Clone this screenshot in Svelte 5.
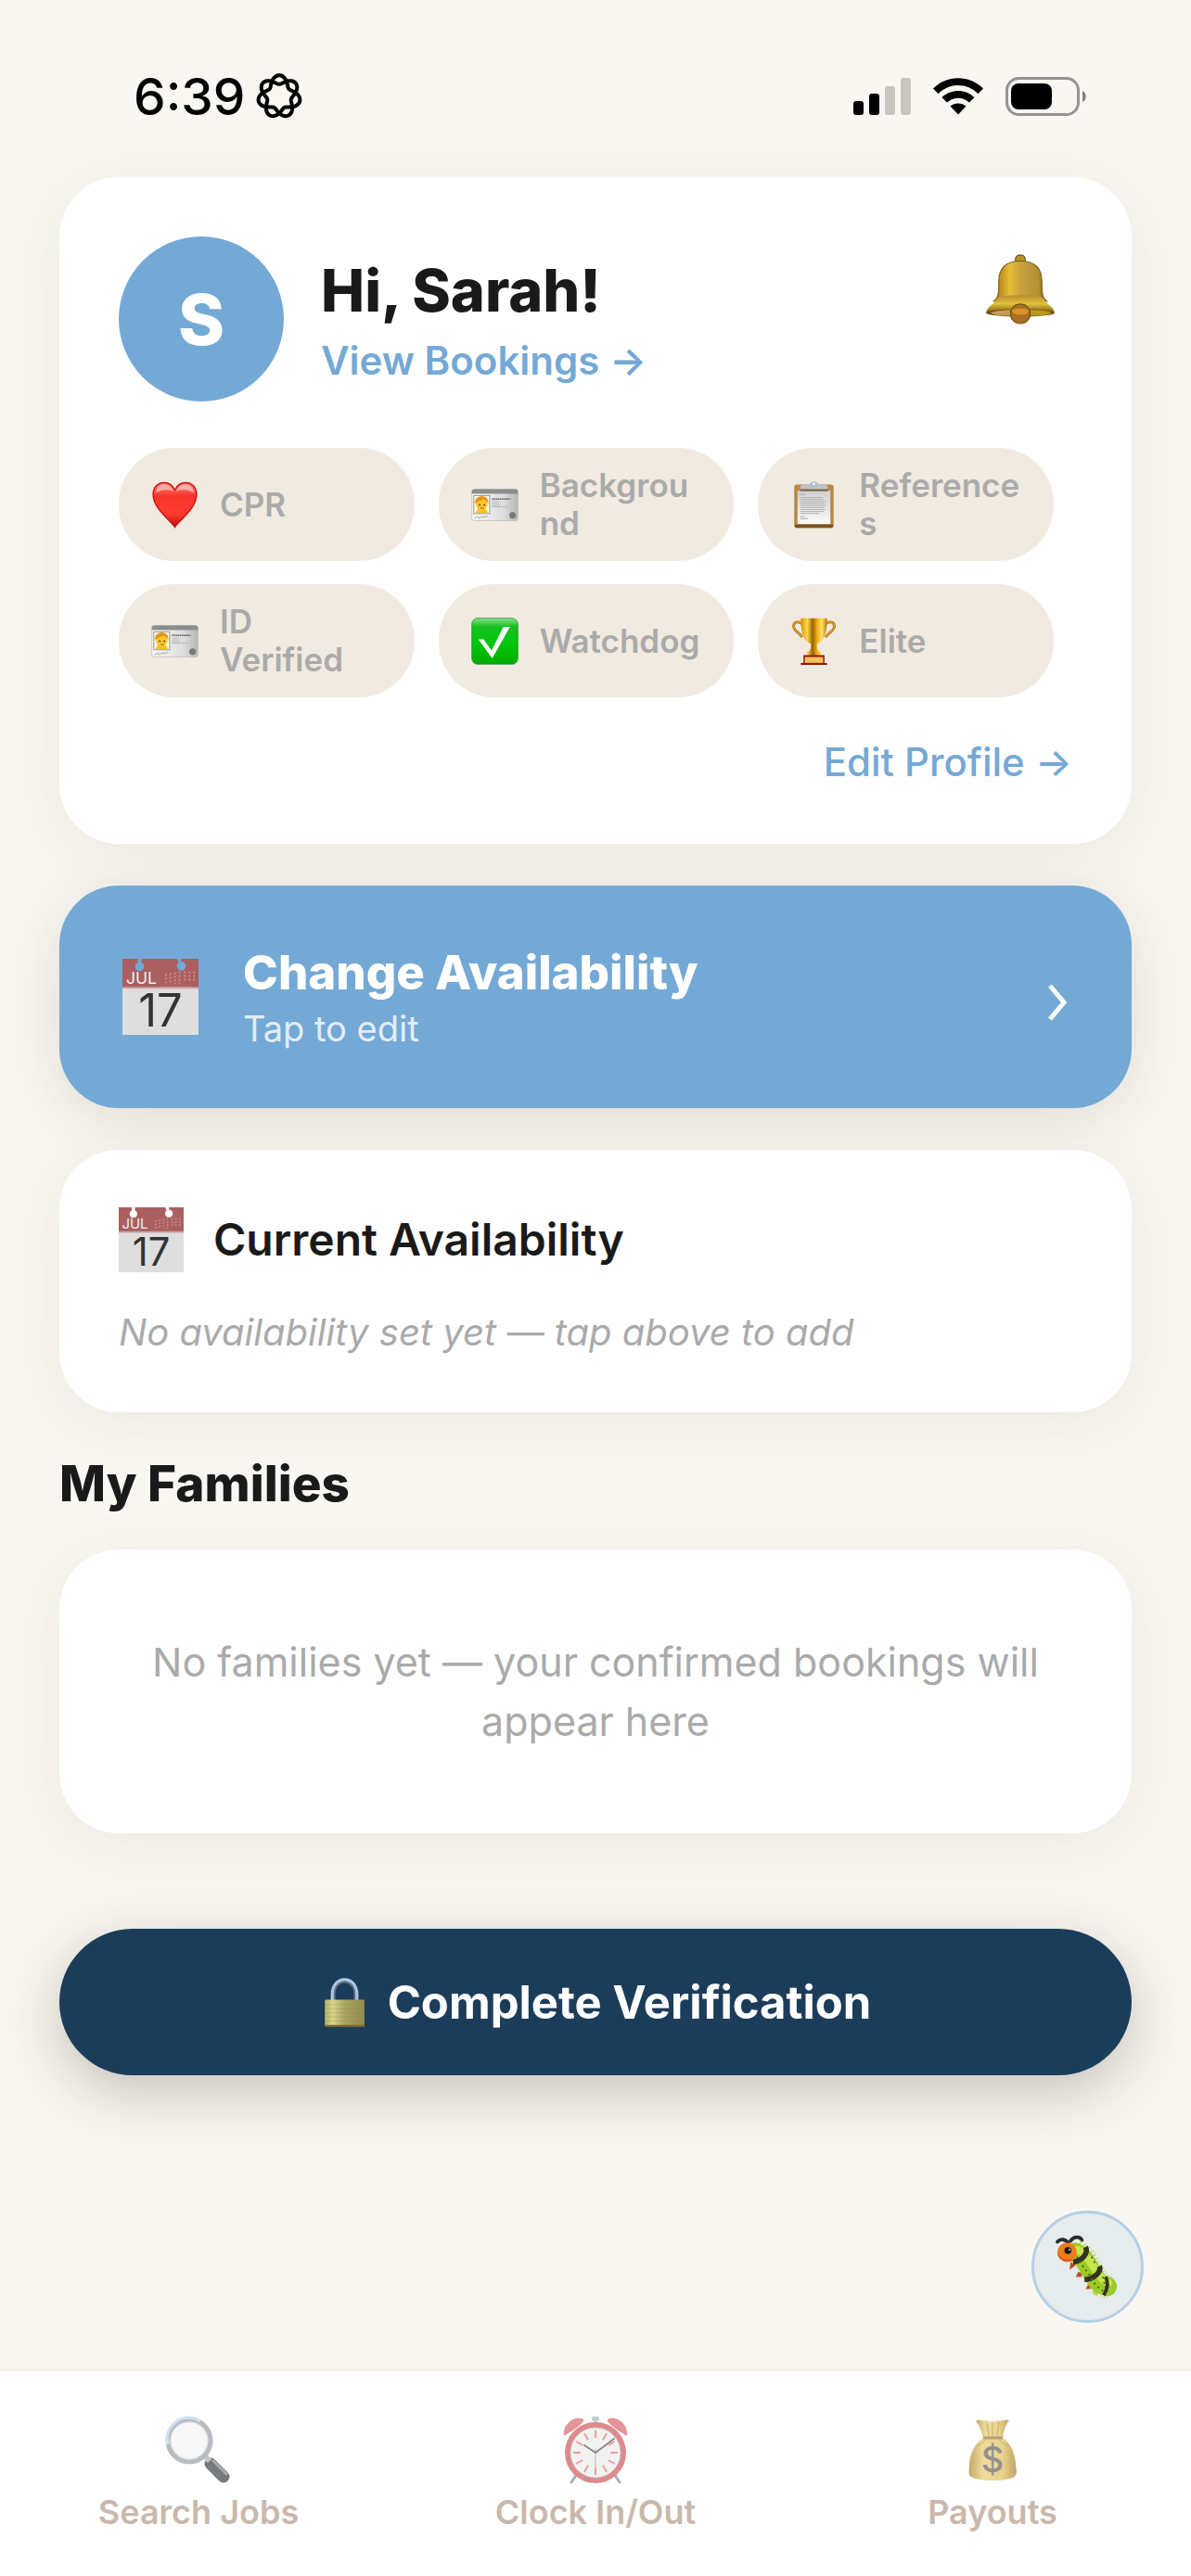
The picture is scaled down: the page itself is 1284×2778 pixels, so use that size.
<script lang="ts">
  const user = { name: 'Sarah', initial: 'S' };

  const badges = [
    { icon: 'heart', label: 'CPR' },
    { icon: 'idCard', label: 'Background' },
    { icon: 'clipboard', label: 'References' },
    { icon: 'idCard', label: 'ID Verified' },
    { icon: 'check', label: 'Watchdog' },
    { icon: 'trophy', label: 'Elite' }
  ];

  const tabs = [
    { icon: 'search', label: 'Search Jobs' },
    { icon: 'clock', label: 'Clock In/Out' },
    { icon: 'money', label: 'Payouts' }
  ];

  const ticks = Array.from({ length: 12 }, (_, i) => i * 30);

  // closed curve with seven interlaced lobes, two turns round the centre
  function knot(radius: number, amp: number) {
    const steps = 280;
    let d = '';
    for (let i = 0; i < steps; i++) {
      const t = (i / steps) * Math.PI * 4;
      const r = radius + amp * Math.cos(3.5 * t);
      const x = 25 + r * Math.sin(t);
      const y = 25 - r * Math.cos(t);
      d += `${i ? 'L' : 'M'}${x.toFixed(2)} ${y.toFixed(2)}`;
    }
    return d + 'Z';
  }
</script>

{#snippet calendar()}
  <svg class="calendar" viewBox="0 0 84 84" aria-hidden="true">
    <path fill="#dedede" d="M0 32h84v52H0z" />
    <path fill="#ab5f60" fill-rule="evenodd" d="M0 0h17v4a5 5 0 1 0 4 0V0h39l2 4a5 5 0 1 0 3-1V0h19v32H0z" />
    <path fill="#c9a5a5" d="M0 31h84v2H0z" />
    <g stroke="#c98f90" stroke-width="2" stroke-dasharray="2 2">
      <path d="M48 17v11M53 16v12M58 15v13M63 14v14M69 14v12M74 14v12M79 14v12" />
    </g>
    <text class="month" x="21" y="28">JUL</text>
    <text class="day" x="42" y="75">17</text>
  </svg>
{/snippet}

{#snippet emoji(name: string)}
  <svg viewBox="0 0 72 72" aria-hidden="true">
    {#if name === 'heart'}
      <defs>
        <linearGradient id="heart" x2="0" y2="1">
          <stop offset="0" stop-color="#ff8a80" />
          <stop offset=".3" stop-color="#f5352c" />
          <stop offset=".7" stop-color="#ff3b30" />
          <stop offset="1" stop-color="#b80d08" />
        </linearGradient>
      </defs>
      <path fill="url(#heart)" stroke="#d30f0c" stroke-width="2" d="M36 70C30 60 3 42 3 20C3 8 11 2 20 2c8 0 13 5 16 11C39 7 44 2 52 2c9 0 17 6 17 18c0 22-27 40-33 50z" />
      <path fill="#fff" opacity=".45" d="M7 18C8 9 13 5 20 5c7 0 11 4 14 10c-9-3-18-3-27 3zM38 15c3-6 7-10 14-10c7 0 12 4 13 13c-9-6-18-6-27-3z" />
    {:else if name === 'idCard'}
      <defs>
        <linearGradient id="plastic">
          <stop offset="0" stop-color="#f6f6f6" />
          <stop offset=".7" stop-color="#dcdcdc" />
          <stop offset="1" stop-color="#b4b4b4" />
        </linearGradient>
      </defs>
      <rect x="1" y="12" width="70" height="48" rx="4" fill="url(#plastic)" stroke="#b9b9b9" />
      <path fill="#8d8d8d" d="M1 19v-3a4 4 0 0 1 4-4h62a4 4 0 0 1 4 4v3z" />
      <path fill="#fff" stroke="#a09a86" stroke-width="1.5" d="M4 22h24v27H4z" />
      <path fill="#ffc21f" d="M7 48c0-5 4-7 9-7s9 2 9 7z" />
      <circle cx="16" cy="35" r="9" fill="#ffc62b" />
      <path fill="#e89412" d="M6 35c-1-9 4-12 10-12s11 3 10 12c-2-4-3-6-7-7c-4 1-10 2-13 7z" />
      <circle cx="13" cy="36" r="1.3" fill="#5b3508" />
      <circle cx="20" cy="36" r="1.3" fill="#5b3508" />
      <path stroke="#5b3508" d="M14 41h5" />
      <path stroke="#333" stroke-width="2" stroke-dasharray="2 1" d="M32 27h28" />
      <path stroke="#999" stroke-dasharray="3 1" d="M32 31h12M32 34h10M32 37h11M32 39h24" />
      <path fill="none" stroke="#888" d="M5 57c5-5 6-3 6-1s4-2 6-2s4 1 8-1" />
      <circle cx="63" cy="52" r="5" fill="#777" />
    {:else if name === 'clipboard'}
      <defs>
        <linearGradient id="paper" x2="0" y2="1">
          <stop offset="0" stop-color="#cfcfcf" />
          <stop offset="1" stop-color="#fafafa" />
        </linearGradient>
      </defs>
      <rect x="6" y="5" width="60" height="66" rx="4" fill="#b88746" />
      <path fill="#7b5122" d="M7 66h58v2a3 3 0 0 1-3 3H10a3 3 0 0 1-3-3z" />
      <path fill="url(#paper)" d="M11 14h50v51H11z" />
      <path stroke="#8f8f8f" d="M15 20h8" />
      <g stroke="#b0b0b0" stroke-width="1.4">
        <path d="M15 25h34M15 28h36M15 31h39M15 34h38M15 37h39M15 40h37M15 43h38M15 46h36M15 49h29M15 54h7M15 57h12" />
      </g>
      <path fill="#775c38" d="M15 12h42v3H15z" />
      <path fill="#b9c4cd" d="M15 12V9c0-3 3-4 9-4h3c2 0 3-4 9-4s7 4 9 4h3c6 0 9 1 9 4v3z" />
      <circle cx="36" cy="4" r="3" fill="#f4f8fb" stroke="#7f9fbd" />
    {:else if name === 'check'}
      <defs>
        <linearGradient id="green" x2="0" y2="1">
          <stop offset="0" stop-color="#8be28d" />
          <stop offset=".18" stop-color="#19bf23" />
          <stop offset=".5" stop-color="#00c90b" />
          <stop offset="1" stop-color="#00ac00" />
        </linearGradient>
      </defs>
      <rect x="1" y="1" width="70" height="70" rx="9" fill="url(#green)" stroke="#12872a" />
      <path fill="#fff" d="M11 33h8l12 17L49 14h10L32 62z" />
    {:else if name === 'trophy'}
      <defs>
        <linearGradient id="gold">
          <stop offset="0" stop-color="#d98f04" />
          <stop offset=".25" stop-color="#ffd84a" />
          <stop offset=".45" stop-color="#9a6204" />
          <stop offset=".6" stop-color="#e8a80f" />
          <stop offset=".8" stop-color="#ffe368" />
          <stop offset="1" stop-color="#b87504" />
        </linearGradient>
      </defs>
      <path fill="none" stroke="#a06a12" stroke-width="4" d="M20 12C15 4 5 6 5 13c0 8 9 9 13 17M52 12c5-8 15-6 15 1c0 8-9 9-13 17" />
      <path fill="none" stroke="#e3a526" stroke-width="2" d="M20 12C15 4 5 6 5 13c0 8 9 9 13 17M52 12c5-8 15-6 15 1c0 8-9 9-13 17" />
      <path fill="url(#gold)" d="M16 1h40c0 20-3 34-15 39c-1 5 0 9 3 12h3v6H25v-6h3c3-3 4-7 3-12C19 35 16 21 16 1z" />
      <path fill="#8e1a0a" d="M20 57h32v12h4v3H16v-3h4z" />
      <path fill="#f5c355" d="M22 60h28v9H22z" />
    {:else if name === 'bell'}
      <defs>
        <linearGradient id="brass">
          <stop offset="0" stop-color="#7d5a0c" />
          <stop offset=".1" stop-color="#b98a1c" />
          <stop offset=".3" stop-color="#e6bd36" />
          <stop offset=".5" stop-color="#c8a240" />
          <stop offset=".85" stop-color="#b29130" />
          <stop offset="1" stop-color="#5f5008" />
        </linearGradient>
        <linearGradient id="rim" x2="0" y2="1">
          <stop offset="0" stop-color="#b58a2c" />
          <stop offset=".5" stop-color="#e2c23c" />
          <stop offset="1" stop-color="#7a5a0c" />
        </linearGradient>
      </defs>
      <rect x="31" y="2" width="10" height="9" rx="4" fill="#b8932a" stroke="#6c530f" />
      <path fill="url(#brass)" stroke="#7a5c12" d="M36 8c15 0 22 8 22 21c0 10 0 17 5 20H9c5-3 5-10 5-20C14 16 21 8 36 8z" />
      <path fill="url(#rim)" d="M13 45c15-3 31-3 46 0c3 7 11 9 12 16c-18-5-52-5-70 0c1-7 9-9 12-16z" />
      <ellipse cx="36" cy="61" rx="35" ry="4" fill="#6d4d10" />
      <path fill="#b89a19" d="M46 58c11 0 19 1 22 3c-4 2-12 3-22 3z" />
      <path fill="#c99a5a" d="M5 61c5-2 13-3 21-3v6c-9 0-17-1-21-3z" />
      <circle cx="36" cy="62" r="10" fill="#a87020" stroke="#70500f" />
      <path fill="#e0902a" d="M27 58c5-2 13-2 18 0c-1 5-5 5-9 5s-8-1-9-5z" />
    {:else if name === 'lock'}
      <defs>
        <linearGradient id="body">
          <stop offset="0" stop-color="#b5b264" />
          <stop offset=".2" stop-color="#d9d38b" />
          <stop offset=".5" stop-color="#aaa562" />
          <stop offset="1" stop-color="#918d4e" />
        </linearGradient>
      </defs>
      <path fill="none" stroke="#6c7378" stroke-width="7" d="M19 36V24c0-27 34-27 34 0v12" />
      <path fill="none" stroke="#a9c8ee" stroke-width="4" d="M18 36V24c0-29 36-29 36 0v12" />
      <rect x="7" y="32" width="58" height="40" rx="2" fill="url(#body)" />
      <path fill="#7b6231" d="M7 69h58v3H7z" />
      <path stroke="#8f8b4b" opacity=".4" d="M7 39h58M7 45h58M7 51h58M7 57h58M7 63h58" />
    {:else if name === 'bug'}
      <path fill="none" stroke="#2d2b2d" stroke-width="4" stroke-linecap="round" d="M1 7c4-4 9-3 12 1M16 6c4-6 11-5 13-1" />
      <path fill="#c8452d" d="M16 30l6 4l-7 5zM25 41l6 3l-3 3h-6zM37 55l6 2l-4 4h-6z" />
      <path fill="none" stroke="#b7d64b" stroke-width="27" stroke-dasharray="1 3" d="M22 18c16 7 18 26 29 38l11 4" />
      <path fill="none" stroke="#9ccb25" stroke-width="22" stroke-linecap="round" d="M21 19c15 6 18 27 29 36l8 3" />
      <path fill="none" stroke="#c6e64c" stroke-width="9" stroke-linecap="round" d="M24 16c15 8 19 25 30 35l5 3" />
      <path fill="none" stroke="#343323" stroke-width="6" d="M33 13c4 7-4 16-14 17M49 35c3 6-7 15-17 15" />
      <path fill="none" stroke="#343323" stroke-width="4" d="M56 47c4 7 2 14-2 21" />
      <path fill="none" stroke="#44631a" stroke-width="2" stroke-dasharray="2 4" d="M23 24l8 12l6 8l8 13l8 6M40 24l4 8M53 47l2 9" />
      <circle cx="12" cy="19" r="11" fill="#ee7a18" />
      <path fill="#d63e18" opacity=".6" d="M1 19a11 11 0 0 0 18 8C9 28 4 25 1 19z" />
      <circle cx="13" cy="17" r="4" fill="#1c1c20" />
      <circle cx="15" cy="16" r="1" fill="#fff" />
    {:else if name === 'search'}
      <path stroke="#777a7c" stroke-width="13" stroke-linecap="round" d="M49 51l14 14" />
      <path stroke="#a8abad" stroke-width="3" stroke-linecap="round" d="M52 48l14 14" />
      <path stroke="#c4c8ca" stroke-width="6" d="M42 42l6 6" />
      <circle cx="26" cy="26" r="23" fill="#f8f8f8" stroke="#b8bcc0" stroke-width="5" />
      <path fill="none" stroke="#cfe2f4" stroke-width="3" d="M3 30A23 23 0 0 1 38 5" />
      <circle cx="26" cy="26" r="20" fill="none" stroke="#d8dadb" />
    {:else if name === 'clock'}
      <path stroke="#a9b0b5" stroke-width="3" stroke-linecap="round" d="M16 62l-6 9M56 62l6 9" />
      <path stroke="#b5bcc2" stroke-width="2" d="M36 3v8M15 14l4 5M57 14l-4 5" />
      <path fill="#e5949a" d="M2 21C0 9 13-2 23 3c2 4-13 13-21 18zM70 21C72 9 59-2 49 3c-2 4 13 13 21 18z" />
      <rect x="32" y="0" width="8" height="5" rx="2" fill="#c2ccd5" />
      <circle cx="36" cy="39" r="30" fill="#f2f2f2" stroke="#dd8a8e" stroke-width="6" />
      <circle cx="36" cy="39" r="27" fill="none" stroke="#c9c9c9" />
      {#each ticks as angle}
        <path stroke="#eea09c" stroke-width="2" d="M36 15v8" transform="rotate({angle} 36 39)" />
      {/each}
      <path stroke="#c9b290" d="M36 35v26" />
      <path fill="none" stroke="#8c8c8c" stroke-width="2" stroke-linecap="round" d="M24 31l12 8l20-15" />
    {:else if name === 'money'}
      <defs>
        <linearGradient id="sack">
          <stop offset="0" stop-color="#c6a96b" />
          <stop offset=".3" stop-color="#efdc9c" />
          <stop offset=".7" stop-color="#e9d38c" />
          <stop offset="1" stop-color="#c2a468" />
        </linearGradient>
      </defs>
      <path fill="url(#sack)" d="M18 5c5-3 8 1 11-1c5 2 8 2 13 0c4 2 7-2 12 0c-5 7-6 13-7 19H26c-2-8-4-13-8-18z" />
      <path fill="url(#sack)" d="M26 23h21c9 6 13 16 14 28c0 4 2 9 0 12c-3 8-46 8-50 0c-1-3 0-8 0-12c1-12 6-22 15-28z" />
      <path fill="none" stroke="#b99d79" stroke-width="3" d="M26 23h21" />
      <path stroke="#c5aa70" d="M30 7l2 14M36 6v15M43 6l-2 15" />
      <path fill="none" stroke="#c5aa70" d="M20 32c5-3 8-6 9-8M52 32c-5-3-8-6-9-8" />
      <text class="dollar" x="36" y="60">$</text>
    {/if}
  </svg>
{/snippet}

<div class="screen">
  <div class="status">
    <div class="status-left">
      <time>6:39</time>
      <svg class="knot" viewBox="0 0 50 50" aria-hidden="true">
        <path d={knot(18, 4.8)} />
      </svg>
    </div>
    <div class="status-right">
      <svg class="signal" viewBox="0 0 62 40" aria-hidden="true">
        <rect y="25" width="11" height="15" rx="3" />
        <rect x="17" y="17" width="11" height="23" rx="3" />
        <rect class="off" x="34" y="9" width="11" height="31" rx="3" />
        <rect class="off" x="51" width="11" height="40" rx="3" />
      </svg>
      <svg class="wifi" viewBox="0 0 54 40" aria-hidden="true">
        <path d="M0 11.500C15-3.500 39-3.500 54 11.500L48.500 17C36 5 18 5 5.500 17Z" />
        <path d="M9.500 21C19 11.500 35 11.500 44.500 21L39 26.500C32 20 22 20 15 26.500Z" />
        <path d="M18.500 30.500C23 26.500 31 26.500 35.500 30.500L27 39.500Z" />
      </svg>
      <svg class="battery" viewBox="0 0 88 42" aria-hidden="true">
        <rect x="1.500" y="1.500" width="77" height="39" rx="13" fill="none" stroke="#969491" stroke-width="3" />
        <rect x="6" y="7" width="44" height="28" rx="8" />
        <path fill="#858381" d="M83 15c5 2 5 10 0 12z" />
      </svg>
    </div>
  </div>

  <main>
    <section class="card profile">
      <header>
        <div class="avatar">{user.initial}</div>
        <div class="greeting">
          <h1>Hi, {user.name}!</h1>
          <a href="#bookings">View Bookings →</a>
        </div>
        <button class="bell" type="button" aria-label="Notifications">{@render emoji('bell')}</button>
      </header>
      <ul class="badges">
        {#each badges as badge}
          <li>
            {@render emoji(badge.icon)}
            <span>{badge.label}</span>
          </li>
        {/each}
      </ul>
      <a class="edit" href="#profile">Edit Profile →</a>
    </section>

    <button class="card change" type="button">
      <span class="icon-large">{@render calendar()}</span>
      <span class="change-text">
        <strong>Change Availability</strong>
        <small>Tap to edit</small>
      </span>
      <svg class="chevron" viewBox="0 0 24 48" aria-hidden="true"><path d="M4 12l15 18L4 48" /></svg>
    </button>

    <section class="card current">
      <h2>{@render calendar()} Current Availability</h2>
      <p>No availability set yet — tap above to add</p>
    </section>

    <section class="families">
      <h2>My Families</h2>
      <div class="card empty">No families yet — your confirmed bookings will appear here</div>
    </section>

    <button class="verify" type="button">
      {@render emoji('lock')}
      <span>Complete Verification</span>
    </button>
  </main>

  <button class="report" type="button" aria-label="Report a bug">{@render emoji('bug')}</button>

  <nav>
    {#each tabs as tab}
      <a href="#{tab.icon}">
        {@render emoji(tab.icon)}
        <span>{tab.label}</span>
      </a>
    {/each}
  </nav>
</div>

<style>
  :global(body) {
    margin: 0;
    background: #faf7f2;
  }

  .screen {
    --blue: #74a9d6;
    --ink: #1a1a1a;
    --muted: #aaaaaa;
    position: relative;
    display: flex;
    flex-direction: column;
    min-height: 100vh;
    background: #faf7f2;
    color: var(--ink);
    font-family: Inter, "Liberation Sans", sans-serif;
  }

  h1, h2, p, ul {
    margin: 0;
    padding: 0;
  }
  a {
    color: var(--blue);
    text-decoration: none;
  }
  button {
    border: none;
    padding: 0;
    font-family: inherit;
    cursor: pointer;
  }
  svg {
    display: block;
    flex: none;
    overflow: visible;
  }

  .status {
    display: flex;
    align-items: center;
    justify-content: space-between;
    padding: 72px 112px 55px 144px;
  }
  .status-left, .status-right {
    display: flex;
    align-items: center;
  }
  .status-left {
    gap: 12px;
  }
  .status-right {
    gap: 24px;
  }
  time {
    color: #000;
    font-size: 55px;
    font-weight: 500;
    line-height: 64px;
  }
  .knot {
    width: 50px;
  }
  .knot path {
    fill: none;
    stroke: #000;
    stroke-width: 4;
  }
  .signal {
    width: 62px;
  }
  .signal .off {
    fill: #c8c5c1;
  }
  .wifi {
    width: 54px;
  }
  .battery {
    width: 88px;
  }

  main {
    display: flex;
    flex: 1;
    flex-direction: column;
    gap: 45px;
    padding: 0 64px 64px;
  }
  .card {
    border-radius: 64px;
    background: #fff;
    box-shadow: 0 12px 64px rgba(60, 50, 30, .08);
  }

  .profile {
    display: flex;
    flex-direction: column;
    padding: 64px;
  }
  header {
    display: flex;
    align-items: center;
    gap: 40px;
  }
  .avatar {
    display: flex;
    align-items: center;
    justify-content: center;
    width: 178px;
    height: 178px;
    border-radius: 50%;
    background: var(--blue);
    color: #fff;
    font-size: 76px;
    font-weight: 800;
  }
  .greeting {
    display: flex;
    flex: 1;
    flex-direction: column;
    gap: 14px;
  }
  h1 {
    font-size: 63px;
    font-weight: 800;
    line-height: 76px;
  }
  .greeting a {
    font-size: 42px;
    font-weight: 600;
    line-height: 48px;
  }
  .bell {
    align-self: flex-start;
    padding: 18px;
    background: none;
  }
  .bell svg {
    width: 76px;
  }

  .badges {
    display: flex;
    flex-wrap: wrap;
    gap: 25px 26px;
    margin-top: 50px;
    list-style: none;
  }
  .badges li {
    display: flex;
    align-items: center;
    gap: 23px;
    box-sizing: border-box;
    width: 31%;
    min-height: 122px;
    padding: 16px 35px;
    border-radius: 60px;
    background: #f1eae0;
    color: var(--muted);
    font-size: 35px;
    font-weight: 600;
    line-height: 41px;
  }
  .badges svg {
    width: 51px;
  }
  .badges span {
    min-width: 0;
    overflow-wrap: anywhere;
  }
  .edit {
    align-self: flex-end;
    margin-top: 46px;
    font-size: 42px;
    font-weight: 500;
    line-height: 48px;
  }

  .calendar .month {
    fill: #eee;
    font-size: 18px;
    font-weight: 400;
    text-anchor: middle;
  }
  .calendar .day {
    fill: #333;
    font-size: 50px;
    font-weight: 400;
    text-anchor: middle;
  }
  .change {
    display: flex;
    align-items: center;
    gap: 44px;
    padding: 62px 64px;
    background: var(--blue);
    color: #fff;
    text-align: left;
    box-shadow: 0 12px 64px rgba(60, 50, 30, .14);
  }
  .icon-large {
    padding: 0 4px;
  }
  .icon-large svg {
    width: 82px;
  }
  .change-text {
    display: flex;
    flex: 1;
    flex-direction: column;
    gap: 4px;
  }
  strong {
    font-size: 51px;
    font-weight: 800;
    line-height: 64px;
  }
  small {
    font-size: 38px;
    line-height: 48px;
    opacity: .8;
  }
  .chevron {
    width: 24px;
    margin-right: 4px;
  }
  .chevron path {
    fill: none;
    stroke: #fff;
    stroke-width: 5;
  }

  .current {
    display: flex;
    flex-direction: column;
    gap: 41px;
    padding: 62px 64px;
  }
  .current h2 {
    display: flex;
    align-items: center;
    gap: 32px;
    font-size: 48px;
    font-weight: 600;
    line-height: 70px;
  }
  .current svg {
    width: 70px;
  }
  .current p {
    color: var(--muted);
    font-size: 40px;
    font-style: italic;
    line-height: 48px;
  }

  .families {
    display: flex;
    flex-direction: column;
    gap: 39px;
  }
  .families h2 {
    font-size: 53px;
    font-weight: 800;
    line-height: 64px;
  }
  .empty {
    padding: 89px 64px;
    color: var(--muted);
    font-size: 43px;
    line-height: 64px;
    text-align: center;
  }

  .verify {
    display: flex;
    align-items: center;
    justify-content: center;
    gap: 20px;
    min-height: 158px;
    margin-top: 58px;
    border-radius: 80px;
    background: #1c3d5a;
    box-shadow: 0 18px 64px rgba(40, 35, 25, .26);
    color: #fff;
    font-size: 49px;
    font-weight: 700;
  }
  .verify svg {
    width: 53px;
  }

  /* floats over the page, above the tab bar */
  .report {
    position: absolute;
    right: 51px;
    bottom: 273px;
    display: flex;
    align-items: center;
    justify-content: center;
    width: 121px;
    height: 121px;
    border: 3px solid #b4d0e7;
    border-radius: 50%;
    background: #e6ebec;
  }
  .report svg {
    width: 68px;
  }

  nav {
    display: flex;
    padding: 49px 0 47px;
    border-top: 2px solid #f4eee8;
    background: #fff;
  }
  nav a {
    display: flex;
    flex: 1;
    flex-direction: column;
    align-items: center;
    gap: 9px;
    color: #c9b8ab;
    font-size: 36px;
    font-weight: 600;
    line-height: 44px;
  }
  nav svg {
    width: 72px;
  }
  nav .dollar {
    fill: #949090;
    font-size: 38px;
    font-weight: 500;
    text-anchor: middle;
  }
</style>
